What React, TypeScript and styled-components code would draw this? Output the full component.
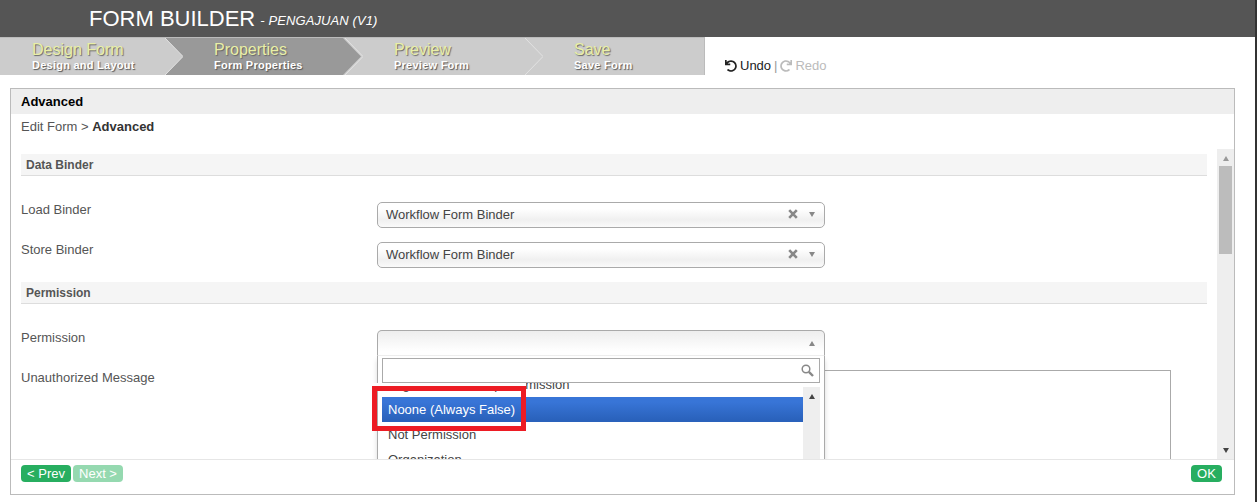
import styled, { createGlobalStyle } from "styled-components";
import { FaUndo, FaRedo } from "react-icons/fa";

const GlobalStyle = createGlobalStyle`
  html, body {
    margin: 0;
    padding: 0;
    background: #fff;
    overflow: hidden;
    font-family: "Liberation Sans", Arial, sans-serif;
  }
`;

const Page = styled.div`
  width: 1257px;
  height: 502px;
  box-sizing: border-box;
  border-right: 2px solid #333;
  display: flex;
  flex-direction: column;
`;

const Header = styled.header`
  height: 37px;
  flex: none;
  box-sizing: border-box;
  padding-left: 89px;
  background: #555;
  color: #fff;
  display: flex;
  align-items: center;
  gap: 5px;
`;

const HeaderTitle = styled.span`
  font-size: 22px;
`;

const HeaderSubtitle = styled.span`
  font-size: 13px;
  letter-spacing: 0.1px;
  font-style: italic;
  margin-top: 4px;
`;

const StepBar = styled.div`
  height: 38px;
  flex: none;
  display: flex;
`;

const Steps = styled.div`
  width: 704px;
  flex: none;
  display: flex;
  background: #ccc;
  border-top: 1px solid #bbb;
  box-sizing: border-box;
`;

const Step = styled.div<{ $first?: boolean; $active?: boolean }>`
  position: relative;
  box-sizing: border-box;
  width: ${(p) => (p.$first ? "165px" : "180px")};
  flex: none;
  padding-left: ${(p) => (p.$first ? "32px" : "49px")};
  padding-top: 2px;

  ${(p) =>
    p.$active &&
    `
    &::before {
      content: "";
      position: absolute;
      top: 0;
      left: 0;
      width: 196px;
      height: 100%;
      background: #999;
      clip-path: polygon(0 0, 178px 0, 196px 50%, 178px 100%, 0 100%, 18px 50%);
    }
  `}
`;

const StepTitle = styled.div`
  position: relative;
  font-size: 16px;
  line-height: 19px;
  color: #e9efa6;
  text-shadow: 1px 1px 1px #666;
`;

const StepSub = styled.div`
  position: relative;
  font-size: 11px;
  font-weight: bold;
  letter-spacing: 0.25px;
  line-height: 12px;
  color: #fff;
  text-shadow: 1px 1px 1px #555;
`;

const StepEdge = styled.svg`
  position: absolute;
  top: 0;
  right: -18px;
  width: 18px;
  height: 37px;
  z-index: 1;
`;

const History = styled.div`
  flex: 1;
  display: flex;
  align-items: flex-end;
  gap: 3px;
  padding: 0 0 2px 20px;
  border-left: 1px solid #bbb;
  font-size: 13px;
  line-height: 15px;
  color: #333;
`;

const HistoryAction = styled.span<{ $disabled?: boolean }>`
  display: inline-flex;
  align-items: center;
  gap: 3px;
  color: ${(p) => (p.$disabled ? "#bbb" : "#222")};

  svg {
    width: 12px;
    height: 12px;
  }
`;

const HistorySep = styled.span`
  color: #999;
`;

const Panel = styled.main`
  flex: none;
  height: 407px;
  margin: 13px 20px 0 10px;
  box-sizing: border-box;
  border: 1px solid #bbb;
  display: flex;
  flex-direction: column;
`;

const PanelTitle = styled.h2`
  margin: 0;
  height: 25px;
  flex: none;
  box-sizing: border-box;
  padding-left: 10px;
  background: #eee;
  font-size: 13px;
  line-height: 25px;
  color: #000;
`;

const Breadcrumb = styled.div`
  height: 35px;
  flex: none;
  box-sizing: border-box;
  padding: 5px 0 0 10px;
  font-size: 13px;
  line-height: 15px;
  color: #555;

  strong {
    color: #333;
  }
`;

const Body = styled.div`
  flex: 1;
  min-height: 0;
  display: flex;
`;

const Content = styled.div`
  flex: 1;
  min-width: 0;
  overflow: hidden;
  padding: 5px 10px 0;
`;

const Section = styled.h3`
  margin: 0 0 26px;
  height: 22px;
  box-sizing: border-box;
  padding-left: 5px;
  background: #f5f5f5;
  border-bottom: 1px solid #ddd;
  font-size: 12px;
  line-height: 22px;
  color: #555;
`;

const Row = styled.div`
  display: grid;
  grid-template-columns: 356px 1fr;
  padding-bottom: 14px;
`;

const Label = styled.label`
  font-size: 13px;
  line-height: 15px;
  color: #555;
`;

const Select = styled.div<{ $open?: boolean }>`
  position: relative;
  width: 448px;
  height: 26px;
  box-sizing: border-box;
  padding: ${(p) => (p.$open ? "0 9px 0 8px" : "0 9px 2px 8px")};
  display: flex;
  align-items: center;
  border: 1px solid #aaa;
  border-radius: ${(p) => (p.$open ? "5px 5px 0 0" : "5px")};
  border-bottom-color: ${(p) => (p.$open ? "transparent" : "#aaa")};
  background: ${(p) =>
    p.$open
      ? "linear-gradient(#eee 0%, #fff 85%)"
      : "linear-gradient(#fff 25%, #f8f8f8 45%, #f0f0f0 70%, #fafafa 100%)"};
  font-size: 13px;
  color: #444;
`;

const SelectValue = styled.span`
  flex: 1;
`;

const ClearIcon = styled.svg`
  flex: none;
  width: 10px;
  height: 10px;
  margin-right: 11px;
`;

const Arrow = styled.span<{ $up?: boolean; $color?: string }>`
  flex: none;
  width: 0;
  height: 0;
  border-left: 3.5px solid transparent;
  border-right: 3.5px solid transparent;
  border-top: ${(p) => (p.$up ? "0" : `5px solid ${p.$color || "#888"}`)};
  border-bottom: ${(p) => (p.$up ? `5px solid ${p.$color || "#888"}` : "0")};
`;

const Drop = styled.div`
  position: absolute;
  z-index: 2;
  top: 25px;
  left: -1px;
  width: 448px;
  height: 132px;
  box-sizing: border-box;
  padding: 2px 4px 0;
  background: #fff;
  border: 1px solid #aaa;
  border-top: 0;
  box-shadow: 0 4px 5px rgba(0, 0, 0, 0.15);
`;

const SearchBox = styled.div`
  height: 25px;
  box-sizing: border-box;
  display: flex;
  align-items: center;
  justify-content: flex-end;
  padding-right: 5px;
  border: 1px solid #aaa;
`;

const SearchIcon = styled.svg`
  width: 13px;
  height: 13px;
`;

const ListWrap = styled.div`
  display: flex;
  height: 105px;
  overflow: hidden;
`;

const List = styled.ul`
  flex: 1;
  margin: -11px 0 0;
  padding: 0;
  list-style: none;
`;

const Option = styled.li<{ $selected?: boolean }>`
  height: 25px;
  padding-left: 6px;
  font-size: 13px;
  line-height: 25px;
  color: ${(p) => (p.$selected ? "#fff" : "#444")};
  background: ${(p) => (p.$selected ? "linear-gradient(#3875d7 20%, #2a62bc 90%)" : "none")};
`;

const Scrollbar = styled.div<{ $small?: boolean }>`
  flex: none;
  width: 17px;
  box-sizing: border-box;
  margin-top: ${(p) => (p.$small ? "4px" : "0")};
  padding: 7px 2px 6px;
  background: #eee;
  display: flex;
  flex-direction: column;
  align-items: center;
`;

const Thumb = styled.div`
  width: 13px;
  height: 88px;
  margin-top: 5px;
  background: #bcbcbc;
`;

const Spacer = styled.div`
  flex: 1;
`;

const Highlight = styled.div`
  position: absolute;
  left: -6px;
  top: 30px;
  width: 154px;
  height: 45px;
  box-sizing: border-box;
  border: 5px solid #ed1c24;
  pointer-events: none;

  &::before {
    content: "";
    position: absolute;
    left: -5px;
    right: -5px;
    top: -8px;
    height: 3px;
    background: #fff;
  }
`;

const TextArea = styled.div`
  height: 200px;
  box-sizing: border-box;
  border: 1px solid #aaa;
  margin-right: 36px;
`;

const Footer = styled.footer`
  height: 35px;
  flex: none;
  box-sizing: border-box;
  padding: 5px 12px 0 10px;
  border-top: 1px solid #e6e6e6;
  display: flex;
  align-items: flex-start;
  gap: 2px;
`;

const Button = styled.button<{ $disabled?: boolean; $width: number }>`
  width: ${(p) => p.$width}px;
  height: 17px;
  padding: 0;
  border: 0;
  border-radius: 4px;
  background: ${(p) => (p.$disabled ? "#95d9b0" : "#27ae60")};
  color: #fff;
  font-family: inherit;
  font-size: 13px;
  line-height: 17px;
`;

const FooterGap = styled.div`
  flex: 1;
`;

const steps = [
  { title: "Design Form", sub: "Design and Layout" },
  { title: "Properties", sub: "Form Properties", active: true },
  { title: "Preview", sub: "Preview Form" },
  { title: "Save", sub: "Save Form" },
];

const options = ["Organization Group Permission", "Noone (Always False)", "Not Permission", "Organization"];

const Binder = ({ label }: { label: string }) => (
  <Row>
    <Label>{label}</Label>
    <Select>
      <SelectValue>Workflow Form Binder</SelectValue>
      <ClearIcon viewBox="0 0 10 10">
        <path d="M1.2 1.2 8.8 8.8M8.8 1.2 1.2 8.8" stroke="#888" strokeWidth="2.6" fill="none" />
      </ClearIcon>
      <Arrow />
    </Select>
  </Row>
);

const App = () => {
  return (
    <Page>
      <GlobalStyle />
      <Header>
        <HeaderTitle>FORM BUILDER</HeaderTitle>
        <HeaderSubtitle>- PENGAJUAN (V1)</HeaderSubtitle>
      </Header>
      <StepBar>
        <Steps>
          {steps.map((step, index) => (
            <Step key={step.title} $first={index === 0} $active={step.active}>
              <StepTitle>{step.title}</StepTitle>
              <StepSub>{step.sub}</StepSub>
              {index < steps.length - 1 && (
                <StepEdge viewBox="0 0 18 37">
                  <polyline points="0,0 18,18.5 0,37" fill="none" stroke="#e2e2e2" strokeWidth="1" />
                </StepEdge>
              )}
            </Step>
          ))}
        </Steps>
        <History>
          <HistoryAction>
            <FaUndo />
            Undo
          </HistoryAction>
          <HistorySep>|</HistorySep>
          <HistoryAction $disabled>
            <FaRedo />
            Redo
          </HistoryAction>
        </History>
      </StepBar>
      <Panel>
        <PanelTitle>Advanced</PanelTitle>
        <Breadcrumb>
          Edit Form &gt; <strong>Advanced</strong>
        </Breadcrumb>
        <Body>
          <Content>
            <Section>Data Binder</Section>
            <Binder label="Load Binder" />
            <Binder label="Store Binder" />
            <Section>Permission</Section>
            <Row>
              <Label>Permission</Label>
              <Select $open>
                <SelectValue />
                <Arrow $up />
                <Drop>
                  <SearchBox>
                    <SearchIcon viewBox="0 0 13 13">
                      <circle cx="5" cy="5" r="3.8" stroke="#888" strokeWidth="1.5" fill="none" />
                      <path d="M7.9 7.9 12 12" stroke="#888" strokeWidth="2.4" fill="none" />
                    </SearchIcon>
                  </SearchBox>
                  <ListWrap>
                    <List>
                      {options.map((option, index) => (
                        <Option key={option} $selected={index === 1}>
                          {option}
                        </Option>
                      ))}
                    </List>
                    <Scrollbar $small>
                      <Arrow $up $color="#444" />
                    </Scrollbar>
                  </ListWrap>
                  <Highlight />
                </Drop>
              </Select>
            </Row>
            <Row>
              <Label>Unauthorized Message</Label>
              <TextArea />
            </Row>
          </Content>
          <Scrollbar>
            <Arrow $up $color="#999" />
            <Thumb />
            <Spacer />
            <Arrow $color="#444" />
          </Scrollbar>
        </Body>
        <Footer>
          <Button $width={50}>&lt; Prev</Button>
          <Button $width={50} $disabled>
            Next &gt;
          </Button>
          <FooterGap />
          <Button $width={31}>OK</Button>
        </Footer>
      </Panel>
    </Page>
  );
};

export default App;
